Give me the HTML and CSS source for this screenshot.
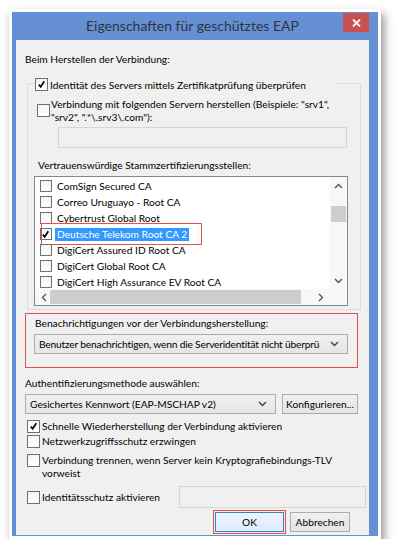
FILE: index.html
```html
<!DOCTYPE html>
<html lang="de">
  <head>
    <meta charset="UTF-8" />
    <meta name="viewport" content="width=device-width, initial-scale=1.0" />
    <title>Eigenschaften für geschütztes EAP</title>
    <link rel="stylesheet" href="styles.css">
  </head>
  <body>
    <div class="fenster">
      <div class="titelleiste">
        <span></span>
        <div class="titel">Eigenschaften für geschütztes EAP</div>
        <div class="schliessen">
          <svg width="9" height="8" viewBox="0 0 9 8"><path d="M1 0.5 L8 7.5 M8 0.5 L1 7.5" stroke="#fff" stroke-width="1.8" fill="none"/></svg>
        </div>
      </div>

      <div class="inhalt">
        <div class="text erste">Beim Herstellen der Verbindung:</div>

        <div class="gruppe">
          <div class="gruppe-kopf">
            <span class="cb an"></span>
            <span>Identität des Servers mittels Zertifikatprüfung überprüfen</span>
          </div>
          <div class="zeile server">
            <span class="cb"></span>
            <span>Verbindung mit folgenden Servern herstellen (Beispiele: "srv1",<br>"srv2", ".*\.srv3\.com"):</span>
          </div>
          <div class="eingabe gesperrt server-feld"></div>

          <div class="text stamm">Vertrauenswürdige Stammzertifizierungsstellen:</div>
          <div class="liste">
            <div class="eintraege">
              <div class="eintrag"><span class="cb klein"></span><span class="name">ComSign Secured CA</span></div>
              <div class="eintrag"><span class="cb klein"></span><span class="name">Correo Uruguayo - Root CA</span></div>
              <div class="eintrag"><span class="cb klein"></span><span class="name">Cybertrust Global Root</span></div>
              <div class="eintrag markiert"><span class="cb klein an"></span><span class="name auswahl">Deutsche Telekom Root CA 2</span></div>
              <div class="eintrag"><span class="cb klein"></span><span class="name">DigiCert Assured ID Root CA</span></div>
              <div class="eintrag"><span class="cb klein"></span><span class="name">DigiCert Global Root CA</span></div>
              <div class="eintrag"><span class="cb klein"></span><span class="name">DigiCert High Assurance EV Root CA</span></div>
            </div>
            <div class="vscroll">
              <svg class="pfeil" width="9" height="6" viewBox="0 0 9 6"><path d="M1 5 L4.5 1.5 L8 5" stroke="#555" stroke-width="1.4" fill="none"/></svg>
              <div class="vdaumen"></div>
              <svg class="pfeil unten" width="9" height="6" viewBox="0 0 9 6"><path d="M1 1 L4.5 4.5 L8 1" stroke="#555" stroke-width="1.4" fill="none"/></svg>
            </div>
            <div class="hscroll">
              <svg class="pfeil" width="6" height="9" viewBox="0 0 6 9"><path d="M5 1 L1.5 4.5 L5 8" stroke="#555" stroke-width="1.4" fill="none"/></svg>
              <div class="hdaumen"></div>
              <svg class="pfeil rechts" width="6" height="9" viewBox="0 0 6 9"><path d="M1 1 L4.5 4.5 L1 8" stroke="#555" stroke-width="1.4" fill="none"/></svg>
            </div>
            <div class="ecke"></div>
          </div>
        </div>

        <div class="rahmen-rot hinweis">
          <div class="text">Benachrichtigungen vor der Verbindungsherstellung:</div>
          <div class="auswahlfeld breit">
            <span class="feldtext eng">Benutzer benachrichtigen, wenn die Serveridentität nicht überprü</span>
            <svg width="9" height="6" viewBox="0 0 9 6"><path d="M1 1 L4.5 4.5 L8 1" stroke="#444" stroke-width="1.4" fill="none"/></svg>
          </div>
        </div>

        <div class="text methode">Authentifizierungsmethode auswählen:</div>
        <div class="methode-zeile">
          <div class="auswahlfeld methode-feld">
            <span class="feldtext">Gesichertes Kennwort (EAP-MSCHAP v2)</span>
            <svg width="9" height="6" viewBox="0 0 9 6"><path d="M1 1 L4.5 4.5 L8 1" stroke="#444" stroke-width="1.4" fill="none"/></svg>
          </div>
          <div class="knopf konfig">Konfigurieren...</div>
        </div>

        <div class="zeile option erste-option"><span class="cb an"></span><span>Schnelle Wiederherstellung der Verbindung aktivieren</span></div>
        <div class="zeile option"><span class="cb"></span><span>Netzwerkzugriffsschutz erzwingen</span></div>
        <div class="zeile option zweizeilig"><span class="cb"></span><span>Verbindung trennen, wenn Server kein Kryptografiebindungs-TLV<br>vorweist</span></div>

        <div class="identitaet">
          <div class="zeile option"><span class="cb"></span><span>Identitätsschutz aktivieren</span></div>
          <div class="eingabe gesperrt ident-feld"></div>
        </div>

        <div class="knopfleiste">
          <div class="rahmen-rot ok-rahmen"><div class="knopf standard">OK</div></div>
          <div class="knopf abbrechen">Abbrechen</div>
        </div>
      </div>
    </div>
  </body>
</html>
```

FILE: styles.css
```css
body,
html {
  margin: 0;
  background-color: #fff;
  font-family: Lato, "Open Sans", sans-serif;
  font-size: 10.2px;
  color: #000;
}

.fenster {
  box-sizing: border-box;
  width: 372px;
  height: 530px;
  margin: 9px 0 0 9px;
  border: 3px solid #fff;
  padding: 0 9px 1px 4px;
  background-color: #6690d4;
  box-shadow: 3px 5px 9px rgba(0, 0, 0, 0.45);
  display: flex;
  flex-direction: column;
}

/* titelleiste */
.titelleiste {
  height: 28px;
  display: grid;
  grid-template-columns: 1fr auto 1fr;
  align-items: start;
}
.titel {
  font-size: 14px;
  color: #2d3440;
  line-height: 28px;
}
.schliessen {
  justify-self: end;
  margin-top: 1px;
  width: 26px;
  height: 19px;
  background-color: #c75050;
  display: flex;
  align-items: center;
  justify-content: center;
}

.inhalt {
  flex: 1;
  background-color: #f0f0f0;
  padding: 12px 0 0 9px;
}

.text {
  line-height: 15px;
  white-space: nowrap;
}

/* checkboxen */
.cb {
  box-sizing: border-box;
  flex: none;
  width: 13px;
  height: 13px;
  border: 1px solid #707070;
  background: linear-gradient(#f4f4f4, #fff);
  position: relative;
}
.cb.klein {
  width: 12px;
  height: 12px;
}
.cb.an::after {
  content: "";
  position: absolute;
  left: 2px;
  top: 1px;
  width: 7px;
  height: 9px;
  background: url("data:image/svg+xml;utf8,<svg xmlns='http://www.w3.org/2000/svg' width='7' height='9' viewBox='0 0 7 9'><path d='M0.8 4.6 L2.7 6.8 L6.3 1.2' stroke='black' stroke-width='1.7' fill='none'/></svg>") no-repeat;
}
.cb.klein.an::after {
  left: 1px;
}

.zeile {
  display: flex;
  align-items: center;
  gap: 2px;
  white-space: nowrap;
}

/* gruppe */
.gruppe {
  box-sizing: border-box;
  width: 334px;
  margin: 16px 0 0 2px;
  border: 1px solid #dcdcdc;
  padding-bottom: 3px;
}
.gruppe-kopf {
  display: flex;
  align-items: center;
  gap: 2px;
  width: 300px;
  margin: -7px 0 0 7px;
  height: 15px;
  background-color: #f0f0f0;
  white-space: nowrap;
}
.server {
  margin: 6px 0 0 9px;
  line-height: 12.5px;
  gap: 1px;
}
.eingabe {
  box-sizing: border-box;
  height: 21px;
  border: 1px solid #d9d9d9;
  background-color: #fff;
}
.eingabe.gesperrt {
  background-color: #f0f0f0;
  border-color: #d5d5d5;
}
.server-feld {
  width: 289px;
  margin: 4px 0 0 30px;
}
.stamm {
  margin: 10px 0 0 10px;
}

/* liste */
.liste {
  box-sizing: border-box;
  width: 314px;
  height: 130px;
  margin: 3px 0 0 6px;
  border: 1px solid #828790;
  background-color: #fff;
  display: grid;
  grid-template-columns: 1fr 17px;
  grid-template-rows: 1fr 16px;
  overflow: hidden;
}
.eintraege {
  padding: 1px 0 0 5px;
  overflow: hidden;
}
.eintrag {
  display: flex;
  align-items: center;
  height: 16px;
  white-space: nowrap;
  position: relative;
}
.name {
  margin-left: 3px;
  padding: 0 2px;
  line-height: 13px;
}
.auswahl {
  background-color: #3399ff;
  color: #fff;
}
.markiert::after {
  content: "";
  position: absolute;
  left: 1px;
  top: -3px;
  width: 159px;
  height: 20px;
  border: 1px solid #e05050;
}
.vscroll {
  background-color: #f7f7f7;
  display: flex;
  flex-direction: column;
  align-items: center;
}
.vscroll .pfeil {
  margin-top: 6px;
}
.vdaumen {
  width: 15px;
  height: 16px;
  margin-top: 17px;
  background-color: #cdcdcd;
}
.vscroll .unten {
  margin-top: auto;
  margin-bottom: 5px;
}
.hscroll {
  background-color: #f7f7f7;
  display: flex;
  align-items: center;
}
.hscroll .pfeil {
  margin-left: 6px;
}
.hdaumen {
  width: 251px;
  height: 14px;
  margin-left: 3px;
  background-color: #cdcdcd;
}
.hscroll .rechts {
  margin-left: auto;
  margin-right: 6px;
}
.ecke {
  background-color: #f7f7f7;
}

/* rote markierungen */
.rahmen-rot {
  border: 1px solid #e05050;
}
.hinweis {
  box-sizing: border-box;
  width: 333px;
  height: 55px;
  margin-top: 3px;
  padding: 2px 0 0 9px;
}
.auswahlfeld {
  box-sizing: border-box;
  height: 20px;
  border: 1px solid #acacac;
  background: linear-gradient(#f0f0f0, #e5e5e5);
  display: flex;
  align-items: center;
  padding: 0 8px 0 4px;
  white-space: nowrap;
}
.auswahlfeld .feldtext {
  flex: 1;
  margin-right: 6px;
}
.eng {
  letter-spacing: -0.18px;
}
.breit {
  width: 314px;
  margin: 3px 0 0 -1px;
}

.methode {
  margin-top: 8px;
}
.methode-zeile {
  display: flex;
  gap: 6px;
  margin-top: 3px;
}
.methode-feld {
  width: 251px;
}
.knopf {
  box-sizing: border-box;
  height: 20px;
  border: 1px solid #acacac;
  background: linear-gradient(#f0f0f0, #e5e5e5);
  display: flex;
  align-items: center;
  justify-content: center;
  white-space: nowrap;
}
.konfig {
  width: 76px;
}

.option {
  margin-left: 2px;
  line-height: 15px;
}
.erste-option {
  margin-top: 5px;
}
.zweizeilig {
  margin-top: 5px;
  align-items: flex-start;
  line-height: 13px;
}
.identitaet {
  display: flex;
  align-items: center;
  margin-top: 6px;
  width: 341px;
}
.ident-feld {
  width: 187px;
  height: 22px;
  margin-left: auto;
}

.knopfleiste {
  display: flex;
  align-items: center;
  gap: 4px;
  margin: 2px 0 0 188px;
}
.ok-rahmen {
  padding: 1px;
}
.standard {
  width: 69px;
  border-color: #3c7fb1;
  background: linear-gradient(#ecf4fc, #dcecfc);
}
.abbrechen {
  width: 60px;
}
```
